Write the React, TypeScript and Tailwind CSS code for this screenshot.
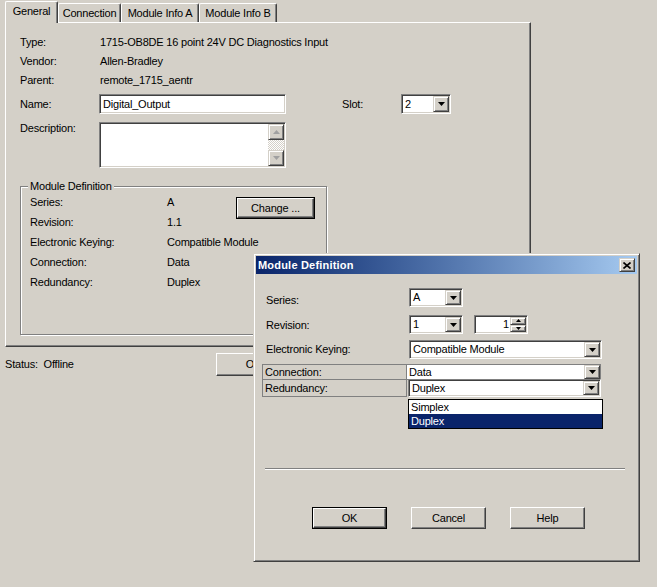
import React from 'react';

const sunken =
  'border border-t-[#808080] border-l-[#808080] border-b-white border-r-white shadow-[inset_1px_1px_0_#404040,inset_-1px_-1px_0_#d4d0c8]';
const raised =
  'bg-[#d4d0c8] border border-t-white border-l-white border-b-[#404040] border-r-[#404040] shadow-[inset_-1px_-1px_0_#808080]';
const raisedSmall =
  'bg-[#d4d0c8] border border-t-[#d4d0c8] border-l-[#d4d0c8] border-b-[#404040] border-r-[#404040] shadow-[inset_1px_1px_0_#fff,inset_-1px_-1px_0_#808080]';

function Arrow({ up = false, color = '#000' }: { up?: boolean; color?: string }) {
  return (
    <svg width="7" height="4" viewBox="0 0 7 4">
      <polygon points={up ? '3.5,0 7,4 0,4' : '0,0 7,0 3.5,4'} fill={color} />
    </svg>
  );
}

function DropBtn() {
  return (
    <div className={`${raisedSmall} w-[16px] h-full flex items-center justify-center`}>
      <Arrow />
    </div>
  );
}

function Combo({ value, className = '' }: { value: string; className?: string }) {
  return (
    <div className={`flex bg-white p-[1px] ${sunken} ${className}`}>
      <span className="flex-1 flex items-center pl-[2px] whitespace-nowrap">{value}</span>
      <DropBtn />
    </div>
  );
}

function WinButton({ label, isDefault = false, className = '' }: { label: string; isDefault?: boolean; className?: string }) {
  if (isDefault) {
    return (
      <div className={`border border-black w-[75px] h-[23px] ${className}`}>
        <div className={`${raised} w-full h-full flex items-center justify-center`}>{label}</div>
      </div>
    );
  }
  return (
    <div className={`${raised} w-[75px] h-[23px] flex items-center justify-center ${className}`}>{label}</div>
  );
}

function Tab({ label, active = false, w }: { label: string; active?: boolean; w: string }) {
  return (
    <div
      className={`${w} flex items-center justify-center border-t border-l border-white border-r border-r-[#404040] rounded-t-[2px] shadow-[inset_-1px_0_0_#808080] bg-[#d4d0c8] ${
        active ? 'relative z-10 h-[22px] -mb-px pb-[3px]' : 'h-[19px] pt-[1px]'
      }`}
    >
      {label}
    </div>
  );
}

export default function App() {
  return (
    <div className="relative w-[657px] h-[587px] bg-[#d4d0c8] text-[11px] leading-[13px] tracking-[-0.2px] text-black overflow-hidden font-['Liberation_Sans',Arial,sans-serif]">
      {/* tabs */}
      <div className="flex items-end h-[22px] pl-[5px]">
        <Tab label="General" active w="w-[53px]" />
        <Tab label="Connection" w="w-[63px]" />
        <Tab label="Module Info A" w="w-[78px]" />
        <Tab label="Module Info B" w="w-[78px]" />
      </div>

      {/* tab page */}
      <div className="ml-[5px] w-[526px] h-[325px] border border-white border-r-[#404040] border-b-[#404040] shadow-[inset_-1px_-1px_0_#808080] pl-[14px] pt-[10px]">
        <div className="grid grid-cols-[80px_1fr] auto-rows-[19px] items-center">
          <span>Type:</span>
          <span>1715-OB8DE 16 point 24V DC Diagnostics Input</span>
          <span>Vendor:</span>
          <span>Allen-Bradley</span>
          <span>Parent:</span>
          <span>remote_1715_aentr</span>
        </div>

        <div className="flex items-center mt-[4px] h-[20px]">
          <span className="w-[79px]">Name:</span>
          <div className={`w-[187px] h-full bg-white flex items-center pl-[3px] ${sunken}`}>Digital_Output</div>
          <span className="ml-[56px] w-[59px]">Slot:</span>
          <Combo value="2" className="w-[50px] h-full" />
        </div>

        <div className="flex mt-[8px]">
          <span className="w-[79px]">Description:</span>
          <div className={`w-[187px] h-[46px] bg-white flex justify-end p-[1px] ${sunken}`}>
            <div className="w-[16px] h-full flex flex-col">
              <div className={`${raisedSmall} h-[16px] flex items-center justify-center`}>
                <Arrow up color="#a0a0a0" />
              </div>
              <div className="flex-1 bg-[repeating-conic-gradient(#ffffff_0_25%,#d4d0c8_0_50%)] bg-[length:2px_2px]" />
              <div className={`${raisedSmall} h-[16px] flex items-center justify-center`}>
                <Arrow color="#a0a0a0" />
              </div>
            </div>
          </div>
        </div>

        {/* module definition group */}
        <div className="relative mt-[18px] w-[307px] h-[149px] border border-[#808080] shadow-[1px_1px_0_#fff,inset_1px_1px_0_#fff] pl-[9px] pt-[5px]">
          <span className="absolute left-[7px] -top-[7px] px-[2px] bg-[#d4d0c8]">Module Definition</span>
          <div className="grid grid-cols-[137px_69px_79px] auto-rows-[20px] items-center">
            <span>Series:</span>
            <span>A</span>
            <WinButton label="Change ..." isDefault className="row-span-2 self-start mt-[5px] !w-[79px] !h-[22px]" />
            <span>Revision:</span>
            <span>1.1</span>
            <span>Electronic Keying:</span>
            <span className="col-span-2">Compatible Module</span>
            <span>Connection:</span>
            <span className="col-span-2">Data</span>
            <span>Redundancy:</span>
            <span className="col-span-2">Duplex</span>
          </div>
        </div>
      </div>

      {/* status row */}
      <div className="flex items-center mt-[6px] h-[22px] pl-[5px]">
        <span className="w-[211px] whitespace-pre">Status:  Offline</span>
        <WinButton label="OK" />
      </div>

      {/* Module Definition dialog */}
      <div className="absolute left-[253px] top-[253px] w-[387px] h-[309px] bg-[#d4d0c8] border border-[#d4d0c8] border-r-[#404040] border-b-[#404040] shadow-[inset_1px_1px_0_#fff,inset_-1px_-1px_0_#808080] p-[2px]">
        <div className="h-[18px] flex items-center justify-between bg-gradient-to-r from-[#0a246a] to-[#a6caf0] pl-[2px] pr-[2px]">
          <span className="font-bold text-white tracking-[0.2px]">Module Definition</span>
          <div className={`${raisedSmall} w-[16px] h-[14px] flex items-center justify-center`}>
            <svg width="8" height="7" viewBox="0 0 8 7">
              <path d="M0.5 0.5 L7.5 6.5 M7.5 0.5 L0.5 6.5" stroke="#000" strokeWidth="1.6" />
            </svg>
          </div>
        </div>

        <div className="relative pl-[6px]">
          <div className="flex items-center mt-[14px] h-[19px]">
            <span className="w-[147px] pl-[4px] pt-[6px]">Series:</span>
            <Combo value="A" className="w-[54px] h-full" />
          </div>
          <div className="flex items-center mt-[8px] h-[19px]">
            <span className="w-[147px] pl-[4px] pt-[2px]">Revision:</span>
            <Combo value="1" className="w-[54px] h-full" />
            <div className={`ml-[11px] w-[54px] h-full bg-white flex p-[1px] ${sunken}`}>
              <span className="flex-1 flex items-center justify-end pr-[1px]">1</span>
              <div className="w-[16px] h-full flex flex-col">
                <div className={`${raisedSmall} flex-1 flex items-center justify-center`}>
                  <svg width="5" height="3" viewBox="0 0 5 3"><polygon points="2.5,0 5,3 0,3" fill="#000" /></svg>
                </div>
                <div className={`${raisedSmall} flex-1 flex items-center justify-center`}>
                  <svg width="5" height="3" viewBox="0 0 5 3"><polygon points="0,0 5,0 2.5,3" fill="#000" /></svg>
                </div>
              </div>
            </div>
          </div>
          <div className="flex items-center mt-[6px] h-[19px]">
            <span className="w-[147px] pl-[4px]">Electronic Keying:</span>
            <Combo value="Compatible Module" className="w-[193px] h-full" />
          </div>

          {/* property grid */}
          <div className="mt-[5px] grid grid-cols-[145px_194px] w-[339px]">
            <div className="h-[16px] border border-[#808080] flex items-center pl-[2px]">Connection:</div>
            <div className="h-[16px] bg-white border-t border-b border-r border-[#808080] flex">
              <span className="flex-1 flex items-center pl-[2px]">Data</span>
              <DropBtn />
            </div>
            <div className="h-[17px] border border-t-0 border-[#808080] flex items-center pl-[2px]">Redundancy:</div>
            <Combo value="Duplex" className="h-[18px] -mt-px ml-px" />
          </div>

          {/* open dropdown list */}
          <div className="absolute left-[152px] top-[111px] w-[195px] h-[30px] bg-white border border-black">
            <div className="h-[14px] flex items-center pl-[2px]">Simplex</div>
            <div className="h-[14px] flex items-center pl-[2px] bg-[#0a246a] text-white">Duplex</div>
          </div>

          <div className="mt-[71px] ml-[3px] w-[360px] h-[2px] border-t border-[#808080] border-b border-b-white" />

          <div className="flex mt-[37px] ml-[50px] gap-[24px]">
            <WinButton label="OK" isDefault className="!h-[22px]" />
            <WinButton label="Cancel" className="!h-[22px]" />
            <WinButton label="Help" className="!h-[22px]" />
          </div>
        </div>
      </div>
    </div>
  );
}
